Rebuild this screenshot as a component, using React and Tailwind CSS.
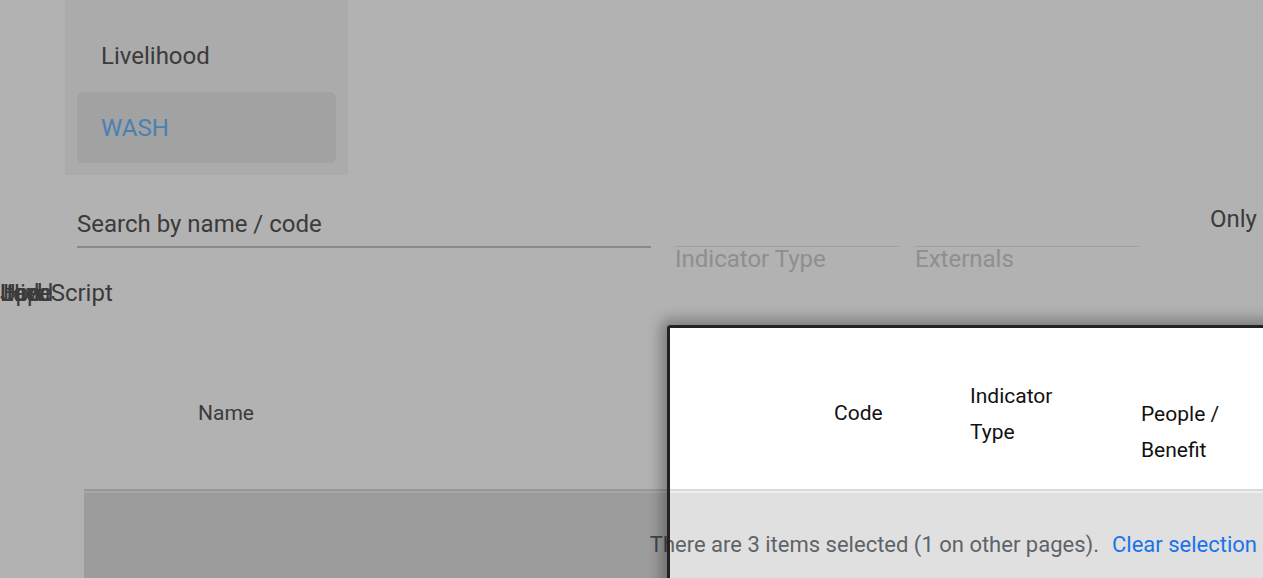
export default function App() {
  return (
    <div className="relative w-[1263px] h-[578px] overflow-hidden bg-white font-['Roboto',sans-serif]">
      {/* Sidebar list */}
      <div className="ml-[65px] w-[283px] bg-[#f5f5f5] pt-5 pb-3 px-3">
        <div className="h-[72px] flex items-center pl-6 text-[24px] text-[#555]">Livelihood</div>
        <div className="h-[71px] flex items-center pl-6 text-[24px] text-[#6bb9ff] bg-[#e8e8e8] rounded-md">WASH</div>
      </div>

      {/* Filters */}
      <div className="flex items-start pl-[77px] mt-[30px]">
        <div className="w-[574px] h-[43px] pb-[3px] flex items-center border-b-2 border-[#c4c4c4] text-[24px] text-[#555]">
          Search by name / code
        </div>
        <div className="ml-6 mt-[41px] w-[224px] border-t border-[#e6e6e6] text-[24px] leading-6 text-[#cdcdcd]">
          Indicator Type
        </div>
        <div className="ml-4 mt-[41px] w-[224px] border-t border-[#e6e6e6] text-[24px] leading-6 text-[#cdcdcd]">
          Externals
        </div>
        <div className="ml-[71px] mt-[2px] text-[24px] leading-6 text-[#555]">Only</div>
      </div>

      {/* Overlapping labels */}
      <div className="relative mt-[10px] h-6 text-[24px] leading-6 text-[#555]">
        <span className="absolute left-0 top-0">JavaScript</span>
        <span className="absolute left-0 top-0">Load</span>
        <span className="absolute left-[3px] top-0">Hide</span>
        <span className="absolute left-0 top-0">Upd</span>
        <span className="absolute left-[6px] top-0">tap</span>
      </div>

      {/* Table */}
      <div className="ml-[84px] mt-[33px] w-[1179px]">
        <div className="flex items-center h-[153px] border-b-2 border-[#d9d9d9] text-[21px] text-[#111] whitespace-nowrap">
          <div className="w-[114px] shrink-0" />
          <div className="w-[636px] shrink-0 text-[#555]">Name</div>
          <div className="w-[136px] shrink-0">Code</div>
          <div className="w-[100px] shrink-0 leading-9 whitespace-normal">Indicator Type</div>
          <div className="w-[71px] shrink-0" />
          <div className="w-[96px] shrink-0 leading-9 pt-9 whitespace-normal">People / Benefit</div>
        </div>
        <div className="h-[2px] bg-[#efefef]" />
        <div className="h-[120px] bg-[#e0e0e0] flex justify-end pr-[6px] pt-[40px] text-[22px] leading-6 whitespace-nowrap">
          <span className="text-[#5f6368]">There are 3 items selected (1 on other pages).</span>
          <span className="ml-[13px] text-[#1a73e8]">Clear selection</span>
        </div>
      </div>

      {/* Spotlight overlay */}
      <div className="absolute left-[667px] top-[325px] w-[700px] h-[400px] border-[3px] border-[#222] rounded-[3px] shadow-[0_0_0_9999px_rgba(0,0,0,0.3),0_0_14px_6px_rgba(0,0,0,0.3)] pointer-events-none" />
    </div>
  );
}
